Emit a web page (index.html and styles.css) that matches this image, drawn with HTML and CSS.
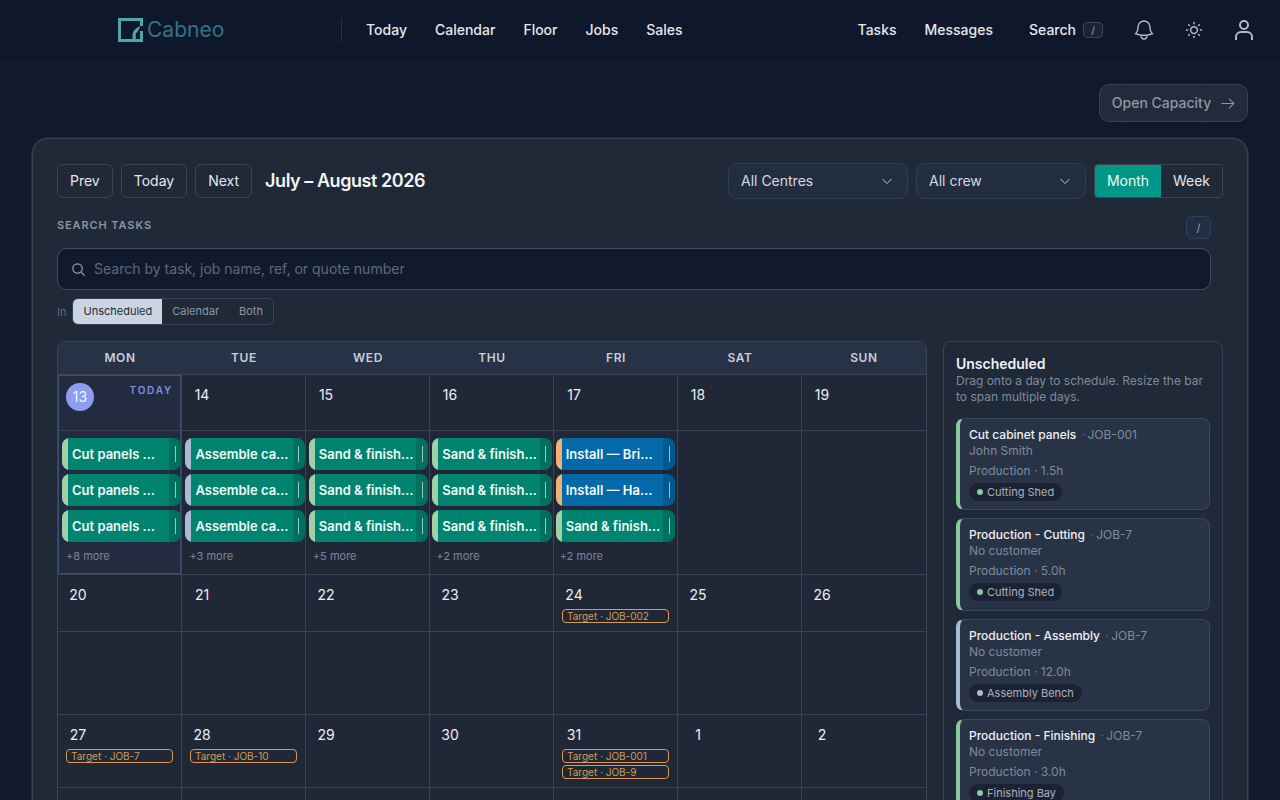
FILE: index.html
```html
<!DOCTYPE html>
<html lang="en">
  <head>
    <meta charset="UTF-8" />
    <meta name="viewport" content="width=device-width, initial-scale=1.0" />
    <title>Cabneo - Calendar</title>
    <link rel="stylesheet" href="styles.css">
  </head>
  <body>
    <header class="topbar">
      <a class="logo">
        <svg class="logo-mark" viewBox="0 0 25 24" fill="none">
          <path d="M23.500 8V1.500H1.500v21h22V13" stroke="#4fa5a8" stroke-width="3" />
          <path d="M14.500 21.500V16.500C14.500 13.500 17 10.500 22 8 21.500 11 20 13.500 17.800 15.500V21.500Z" fill="#4fa5a8" />
        </svg>
        <span>Cabneo</span>
      </a>
      <nav class="nav-main">
        <a>Today</a>
        <a>Calendar</a>
        <a>Floor</a>
        <a>Jobs</a>
        <a>Sales</a>
      </nav>
      <nav class="nav-right">
        <a>Tasks</a>
        <a>Messages</a>
        <a class="nav-search">Search <kbd class="key-small">/</kbd></a>
      </nav>
      <div class="top-icons">
        <svg class="icon-bell" viewBox="0 0 24 24" fill="none" stroke="currentColor" stroke-width="1.4">
          <path d="M14.857 17.082a23.848 23.848 0 0 0 5.454-1.31A8.967 8.967 0 0 1 18 9.750V9A6 6 0 0 0 6 9v.750a8.967 8.967 0 0 1-2.312 6.022c1.733.640 3.560 1.085 5.455 1.310m5.714 0a24.255 24.255 0 0 1-5.714 0m5.714 0a3 3 0 1 1-5.714 0" />
        </svg>
        <svg class="icon-sun" viewBox="0 0 24 24" fill="none" stroke="currentColor" stroke-width="2" stroke-linecap="round">
          <circle cx="12" cy="12" r="4.500" />
          <path d="M12 2v1.500M12 20.500V22M4.900 4.900l1 1M18.100 18.100l1 1M2 12h1.500M20.500 12H22M4.900 19.100l1-1M18.100 5.900l1-1" />
        </svg>
        <svg class="icon-user" viewBox="0 0 18 20" fill="none" stroke="currentColor" stroke-width="2">
          <circle cx="9" cy="5" r="4" />
          <path d="M1 20v-3a5 5 0 0 1 5-5h6a5 5 0 0 1 5 5v3" />
        </svg>
      </div>
    </header>

    <main class="page">
      <div class="page-actions">
        <a class="btn-capacity">Open Capacity
          <svg viewBox="0 0 16 16" fill="none" stroke="currentColor" stroke-width="1.1">
            <path d="M1.500 8h13M9.500 2.800 14.700 8l-5.200 5.200" />
          </svg>
        </a>
      </div>

      <section class="panel">
        <div class="toolbar">
          <button class="btn">Prev</button>
          <button class="btn">Today</button>
          <button class="btn">Next</button>
          <h1 class="range-title">July – August 2026</h1>
          <div class="select select-centre">All Centres
            <svg viewBox="0 0 12 12" fill="none" stroke="currentColor" stroke-width="1.2"><path d="M1.500 4 6 8.500 10.500 4" /></svg>
          </div>
          <div class="select select-crew">All crew
            <svg viewBox="0 0 12 12" fill="none" stroke="currentColor" stroke-width="1.2"><path d="M1.500 4 6 8.500 10.500 4" /></svg>
          </div>
          <div class="view-toggle">
            <span class="view-active">Month</span>
            <span class="view-week">Week</span>
          </div>
        </div>

        <div class="search-head">
          <span class="search-label">SEARCH TASKS</span>
          <kbd class="key-box">/</kbd>
        </div>
        <div class="search-box">
          <svg viewBox="0 0 16 16" fill="none" stroke="currentColor" stroke-width="1.3">
            <circle cx="7" cy="7" r="5" />
            <path d="m11 11 3.500 3.500" />
          </svg>
          <span>Search by task, job name, ref, or quote number</span>
        </div>
        <div class="scope-row">
          <span class="scope-in">In</span>
          <div class="scope-tabs">
            <span class="scope-active">Unscheduled</span>
            <span>Calendar</span>
            <span>Both</span>
          </div>
        </div>

        <div class="board">
          <div class="calendar">
            <div class="weekdays">
              <span>MON</span><span>TUE</span><span>WED</span><span>THU</span><span>FRI</span><span>SAT</span><span>SUN</span>
            </div>

            <div class="week-head">
              <div class="day day-today">
                <span class="date-circle">13</span>
                <span class="today-label">TODAY</span>
              </div>
              <div class="day"><span class="date">14</span></div>
              <div class="day"><span class="date">15</span></div>
              <div class="day"><span class="date">16</span></div>
              <div class="day"><span class="date">17</span></div>
              <div class="day"><span class="date">18</span></div>
              <div class="day"><span class="date">19</span></div>
            </div>
            <div class="week-body week-tall">
              <div class="cells">
                <div class="cell-today"></div><div></div><div></div><div></div><div></div><div></div><div></div>
              </div>
              <div class="events">
                <div class="event-col">
                  <div class="bar"><i class="stripe-cut"></i><span>Cut panels …</span><b></b></div>
                  <div class="bar"><i class="stripe-cut"></i><span>Cut panels …</span><b></b></div>
                  <div class="bar"><i class="stripe-cut"></i><span>Cut panels …</span><b></b></div>
                  <div class="more">+8 more</div>
                </div>
                <div class="event-col">
                  <div class="bar"><i class="stripe-bench"></i><span>Assemble ca…</span><b></b></div>
                  <div class="bar"><i class="stripe-bench"></i><span>Assemble ca…</span><b></b></div>
                  <div class="bar"><i class="stripe-bench"></i><span>Assemble ca…</span><b></b></div>
                  <div class="more">+3 more</div>
                </div>
                <div class="event-col">
                  <div class="bar"><i class="stripe-cut"></i><span>Sand &amp; finish…</span><b></b></div>
                  <div class="bar"><i class="stripe-cut"></i><span>Sand &amp; finish…</span><b></b></div>
                  <div class="bar"><i class="stripe-cut"></i><span>Sand &amp; finish…</span><b></b></div>
                  <div class="more">+5 more</div>
                </div>
                <div class="event-col">
                  <div class="bar"><i class="stripe-cut"></i><span>Sand &amp; finish…</span><b></b></div>
                  <div class="bar"><i class="stripe-cut"></i><span>Sand &amp; finish…</span><b></b></div>
                  <div class="bar"><i class="stripe-cut"></i><span>Sand &amp; finish…</span><b></b></div>
                  <div class="more">+2 more</div>
                </div>
                <div class="event-col">
                  <div class="bar bar-install"><i class="stripe-install"></i><span>Install — Bri…</span><b></b></div>
                  <div class="bar bar-install"><i class="stripe-install"></i><span>Install — Ha…</span><b></b></div>
                  <div class="bar"><i class="stripe-cut"></i><span>Sand &amp; finish…</span><b></b></div>
                  <div class="more">+2 more</div>
                </div>
              </div>
            </div>

            <div class="week-head">
              <div class="day"><span class="date">20</span></div>
              <div class="day"><span class="date">21</span></div>
              <div class="day"><span class="date">22</span></div>
              <div class="day"><span class="date">23</span></div>
              <div class="day"><span class="date">24</span><span class="target">Target · JOB-002</span></div>
              <div class="day"><span class="date">25</span></div>
              <div class="day"><span class="date">26</span></div>
            </div>
            <div class="week-body week-short">
              <div class="cells">
                <div></div><div></div><div></div><div></div><div></div><div></div><div></div>
              </div>
            </div>

            <div class="week-head week-last">
              <div class="day"><span class="date">27</span><span class="target">Target · JOB-7</span></div>
              <div class="day"><span class="date">28</span><span class="target">Target · JOB-10</span></div>
              <div class="day"><span class="date">29</span></div>
              <div class="day"><span class="date">30</span></div>
              <div class="day"><span class="date">31</span><span class="target">Target · JOB-001</span><span class="target">Target · JOB-9</span></div>
              <div class="day"><span class="date">1</span></div>
              <div class="day"><span class="date">2</span></div>
            </div>

            <div class="week-head">
              <div class="day"></div>
              <div class="day"></div>
              <div class="day"></div>
              <div class="day"></div>
              <div class="day"></div>
              <div class="day"></div>
              <div class="day"></div>
            </div>
          </div>

          <aside class="sidebar">
            <h2>Unscheduled</h2>
            <p class="sidebar-hint">Drag onto a day to schedule. Resize the bar to span multiple days.</p>

            <div class="task-card">
              <div class="task-title"><strong>Cut cabinet panels</strong> <em>·</em> JOB-001</div>
              <div>John Smith</div>
              <div class="task-hours">Production · 1.5h</div>
              <span class="task-place"><i class="dot-green"></i>Cutting Shed</span>
            </div>
            <div class="task-card">
              <div class="task-title"><strong>Production - Cutting</strong> <em>·</em> JOB-7</div>
              <div>No customer</div>
              <div class="task-hours">Production · 5.0h</div>
              <span class="task-place"><i class="dot-green"></i>Cutting Shed</span>
            </div>
            <div class="task-card task-bench">
              <div class="task-title"><strong>Production - Assembly</strong> <em>·</em> JOB-7</div>
              <div>No customer</div>
              <div class="task-hours">Production · 12.0h</div>
              <span class="task-place"><i class="dot-blue"></i>Assembly Bench</span>
            </div>
            <div class="task-card">
              <div class="task-title"><strong>Production - Finishing</strong> <em>·</em> JOB-7</div>
              <div>No customer</div>
              <div class="task-hours">Production · 3.0h</div>
              <span class="task-place"><i class="dot-green"></i>Finishing Bay</span>
            </div>
          </aside>
        </div>
      </section>
    </main>
  </body>
</html>
```

FILE: styles.css
```css
* {
  box-sizing: border-box;
}
body {
  margin: 0;
  font-family: Inter, "Noto Sans", sans-serif;
  color: #e5e7eb;
  background-color: #111a2a;
}
a {
  color: inherit;
}

/* top bar */
.topbar {
  height: 60px;
  display: flex;
  align-items: center;
  padding-left: 118px;
  background: #0f172a;
  font-size: 14px;
  line-height: 20px;
  font-weight: 500;
}
.logo {
  width: 223px;
  display: flex;
  align-items: center;
  gap: 4px;
  font-size: 21px;
  font-weight: 400;
  color: #2f7486;
}
.logo-mark {
  width: 25px;
  height: 24px;
}
.nav-main {
  display: flex;
  gap: 28px;
  height: 24px;
  align-items: center;
  padding-left: 24px;
  border-left: 1px solid #283244;
}
.nav-right {
  display: flex;
  align-items: center;
  gap: 28px;
  margin-left: auto;
}
.nav-search {
  display: flex;
  align-items: center;
  gap: 7px;
  margin-left: 8px;
}
.key-small {
  width: 20px;
  height: 16px;
  display: flex;
  align-items: center;
  justify-content: center;
  border: 1px solid #3a4557;
  border-radius: 4px;
  background: #1a2333;
  font-family: inherit;
  font-size: 10px;
  color: #8d96a5;
}
.top-icons {
  display: flex;
  align-items: center;
  margin-left: 29px;
  margin-right: 27px;
  color: #b3b9c3;
}
.icon-bell {
  width: 24px;
  height: 24px;
}
.icon-sun {
  width: 18px;
  height: 18px;
  margin-left: 29px;
}
.icon-user {
  width: 18px;
  height: 20px;
  margin-left: 32px;
}

/* page */
.page {
  padding: 24px 32px 32px;
  background-image:
    linear-gradient(to right, #141c2c 1px, transparent 1px),
    linear-gradient(to bottom, #141c2c 1px, transparent 1px);
  background-size: 80px 80px;
}
.page-actions {
  display: flex;
  justify-content: flex-end;
  margin-bottom: 16px;
}
.btn-capacity {
  height: 38px;
  width: 149px;
  display: flex;
  align-items: center;
  justify-content: center;
  gap: 9px;
  background: #222a3c;
  border: 1px solid #354258;
  border-radius: 10px;
  font-size: 14px;
  line-height: 20px;
  font-weight: 500;
  color: #8d96a6;
}
.btn-capacity svg {
  width: 15px;
  height: 15px;
}

.panel {
  background: #1f2937;
  border: 1px solid #3a4454;
  border-radius: 16px;
  padding: 24px;
  box-shadow: 0 0 0 1px rgba(58, 68, 84, 0.4);
}

/* toolbar */
.toolbar {
  display: flex;
  align-items: center;
  gap: 8px;
  height: 36px;
  line-height: 20px;
}
.btn {
  height: 34px;
  padding: 0 12px;
  background: #1f2937;
  border: 1px solid #3d4550;
  border-radius: 6px;
  font-family: inherit;
  font-size: 14px;
  line-height: 20px;
  color: #e5e7eb;
}
.range-title {
  margin: 0 0 0 5px;
  font-size: 18px;
  line-height: 24px;
  font-weight: 600;
  letter-spacing: -0.45px;
  color: #f3f4f6;
}
.select {
  height: 36px;
  display: flex;
  align-items: center;
  justify-content: space-between;
  padding: 0 14px 0 12px;
  background: #222d3f;
  border: 1px solid #2f3c52;
  border-radius: 8px;
  font-size: 14px;
  color: #d5d9e0;
}
.select svg {
  width: 12px;
  height: 12px;
  color: #7f8a9b;
}
.select-centre {
  width: 180px;
  margin-left: auto;
}
.select-crew {
  width: 170px;
}
.view-toggle {
  height: 34px;
  width: 129px;
  display: flex;
  border: 1px solid #3d4550;
  border-radius: 4px;
  font-size: 14px;
  line-height: 32px;
  text-align: center;
  overflow: hidden;
}
.view-active {
  width: 66px;
  background: #009688;
  color: #eafaf7;
}
.view-week {
  flex: 1;
  background: #1f2937;
}

/* search */
.search-head {
  display: flex;
  align-items: flex-start;
  justify-content: space-between;
  margin-top: 17px;
  padding-right: 12px;
}
.search-label {
  margin-top: 3px;
  font-size: 11px;
  line-height: 13px;
  font-weight: 600;
  letter-spacing: 0.9px;
  color: #8a94a3;
}
.key-box {
  width: 25px;
  height: 23px;
  display: flex;
  align-items: center;
  justify-content: center;
  background: #212e43;
  border: 1px solid #31415a;
  border-radius: 6px;
  font-family: inherit;
  font-size: 11px;
  color: #9aa4b3;
}
.search-box {
  height: 42px;
  margin-top: 9px;
  margin-right: 12px;
  display: flex;
  align-items: center;
  gap: 8px;
  padding-left: 13px;
  background: #111a2c;
  border: 1px solid #3e4d64;
  border-radius: 10px;
  font-size: 14px;
  line-height: 20px;
  color: #5d697c;
}
.search-box svg {
  width: 15px;
  height: 15px;
  color: #9ba3af;
}
.scope-row {
  display: flex;
  align-items: center;
  gap: 6px;
  margin-top: 8px;
  font-size: 11px;
}
.scope-in {
  color: #5f6c80;
}
.scope-tabs {
  height: 27px;
  display: flex;
  align-items: center;
  border: 1px solid #34425a;
  border-radius: 6px;
  overflow: hidden;
  color: #8c96a6;
}
.scope-tabs span {
  line-height: 25px;
  padding: 0 10px;
}
.scope-tabs .scope-active {
  background: #cbd5e1;
  color: #1e293b;
}

/* calendar */
.board {
  display: flex;
  gap: 16px;
  margin-top: 16px;
  align-items: flex-start;
}
.calendar {
  width: 870px;
  background: #202838;
  border: 1px solid #384354;
  border-radius: 8px;
  overflow: hidden;
}
.weekdays {
  display: grid;
  grid-template-columns: repeat(7, 1fr);
  height: 33px;
  padding-bottom: 1px;
  align-items: center;
  background: #283246;
  border-bottom: 1px solid #3d4550;
  font-size: 12px;
  line-height: 16px;
  font-weight: 600;
  letter-spacing: 0.6px;
  text-align: center;
  color: #c8ced8;
}
.week-head {
  display: grid;
  grid-template-columns: repeat(7, 1fr);
  min-height: 56px;
  border-bottom: 1px solid #384354;
}
.day {
  display: flex;
  flex-direction: column;
  align-items: flex-start;
  gap: 2px;
  padding: 10px 8px 8px;
  border-right: 1px solid #384354;
}
.day:last-child {
  border-right: none;
}
.date {
  width: 24px;
  margin-bottom: 2px;
  font-size: 14px;
  line-height: 20px;
  text-align: center;
  color: #eceef2;
}
.day-today {
  flex-direction: row;
  justify-content: space-between;
  background: #232b40;
  box-shadow: inset 1px 0 0 #3e4d72, inset -1px 0 0 #3e4d72, inset 0 1px 0 #3e4d72;
}
.date-circle {
  width: 28px;
  height: 28px;
  margin-top: -2px;
  border-radius: 50%;
  background: #8f9df0;
  font-size: 14px;
  line-height: 28px;
  text-align: center;
  color: #f5f6ff;
}
.today-label {
  margin-top: -1px;
  font-size: 10px;
  font-weight: 600;
  letter-spacing: 1.8px;
  line-height: 12px;
  color: #7f8fe6;
}
.target {
  width: 100%;
  height: 14px;
  padding-left: 4px;
  border: 1px solid #dc9a4a;
  border-radius: 4px;
  font-size: 10px;
  line-height: 12px;
  color: #d69a50;
  white-space: nowrap;
}
.week-body {
  display: grid;
  border-bottom: 1px solid #384354;
}
.week-tall {
  height: 144px;
}
.week-short {
  height: 83px;
}
.cells,
.events {
  grid-area: 1 / 1;
  display: grid;
}
.cells {
  grid-template-columns: repeat(7, 1fr);
}
.cells div {
  border-right: 1px solid #384354;
}
.cells div:last-child {
  border-right: none;
}
.cells .cell-today {
  background: #232b40;
  box-shadow: inset 1px 0 0 #3e4d72, inset -1px 0 0 #3e4d72, inset 0 -1px 0 #3e4d72;
}
.events {
  grid-template-columns: repeat(7, 1fr);
  gap: 4px;
  padding: 7px 4px 0;
}
.event-col {
  min-width: 0;
  display: flex;
  flex-direction: column;
  gap: 4px;
}
.bar {
  height: 32px;
  display: flex;
  align-items: center;
  background: #00846f;
  border-radius: 8px;
  overflow: hidden;
  font-size: 13px;
  line-height: 18px;
  font-weight: 600;
  color: #f2fbf9;
}
.bar i {
  width: 6px;
  height: 100%;
  flex: none;
}
.bar span {
  flex: 1;
  min-width: 0;
  padding-left: 4px;
  white-space: nowrap;
}
.bar b {
  width: 12px;
  height: 100%;
  flex: none;
  display: flex;
  align-items: center;
  justify-content: center;
  background: rgba(0, 0, 0, 0.15);
}
.bar b::after {
  content: "";
  width: 1px;
  height: 16px;
  background: rgba(255, 255, 255, 0.6);
}
.bar-install {
  background: #0369a8;
}
.stripe-cut {
  background: #9fd0a9;
}
.stripe-bench {
  background: #a9bcd4;
}
.stripe-install {
  background: #efb273;
}
.more {
  padding: 3px 0 0 4px;
  font-size: 11px;
  line-height: 14px;
  color: #7e8694;
}

/* sidebar */
.sidebar {
  width: 280px;
  padding: 13px 12px 12px;
  background: #1f2937;
  border: 1px solid #364153;
  border-radius: 8px;
  font-size: 12px;
  line-height: 16px;
  color: #7f8a9b;
}
.sidebar h2 {
  margin: 0;
  font-size: 14px;
  line-height: 18px;
  font-weight: 600;
  color: #f0f2f5;
}
.sidebar-hint {
  margin: 0 0 13px;
}
.task-card {
  min-height: 92.33px;
  margin-bottom: 8px;
  padding: 8px 8px 8px 9px;
  background: #293346;
  border: 1px solid #3a4659;
  border-left: 4px solid #8acb9b;
  border-radius: 8px;
}
.task-bench {
  border-left-color: #a9bcd4;
}
.task-title strong {
  font-weight: 500;
  color: #eef0f4;
}
.task-title em {
  font-style: normal;
  margin: 0 -1px 0 2px;
  color: #5f6b7d;
}
.task-hours {
  margin-top: 4px;
}
.task-place {
  display: inline-flex;
  align-items: center;
  gap: 4px;
  height: 18px;
  margin-top: 4px;
  padding: 0 8px;
  background: #1a2234;
  border-radius: 9px;
  font-size: 11px;
  color: #aab2be;
  vertical-align: top;
}
.task-place i {
  width: 6px;
  height: 6px;
  border-radius: 50%;
}
.dot-green {
  background: #8acb9b;
}
.dot-blue {
  background: #a9bcd4;
}
```
